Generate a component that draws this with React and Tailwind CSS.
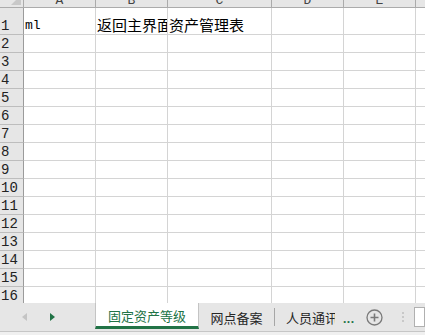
import React from 'react';

const cols = [
  { key: 'A', w: 'w-[72px]' },
  { key: 'B', w: 'w-[72px]' },
  { key: 'C', w: 'w-[104px]' },
  { key: 'D', w: 'w-[72px]' },
  { key: 'E', w: 'w-[72px]' },
];

const rows = Array.from({ length: 16 }, (_, i) => i + 1);

const mono = "font-['Liberation_Mono','Noto_Sans_CJK_SC',monospace]";
const cjk = "font-['Noto_Sans_CJK_SC','Noto_Sans',sans-serif]";

function Cell({ col, row }) {
  let content = null;
  if (row === 1 && col === 'A') content = <span className={`${mono} text-[13px] text-black`}>ml</span>;
  if (row === 1 && col === 'B') content = <span className={`${cjk} text-[15px] text-black`}>返回主界面</span>;
  if (row === 1 && col === 'C') content = <span className={`${cjk} text-[15px] text-black`}>资产管理表</span>;
  return (
    <div className={`${cols.find(c => c.key === col).w} shrink-0 h-full border-r border-b border-[#d4d4d4] bg-white flex items-end pl-[1px] pb-[2px] overflow-hidden whitespace-nowrap leading-none`}>
      {content}
    </div>
  );
}

export default function App() {
  return (
    <div className="w-[425px] h-[335px] overflow-hidden bg-white flex flex-col select-none">
      {/* column header */}
      <div className="flex h-[8px] shrink-0 bg-[#e6e6e6]">
        <div className="w-[24px] shrink-0 h-full border-r border-b border-[#ababab] relative overflow-hidden">
          <div className="absolute right-[2px] bottom-[2px] w-0 h-0 border-l-[10px] border-l-transparent border-b-[10px] border-b-[#c8c8c8]" />
        </div>
        {cols.map(c => (
          <div key={c.key} className={`${c.w} shrink-0 h-full border-r border-b border-[#ababab] overflow-hidden flex justify-center`}>
            <span className={`${mono} block text-[13px] leading-[14px] mt-[-6px] text-[#444]`}>{c.key}</span>
          </div>
        ))}
        <div className="flex-1 h-full border-b border-[#ababab]" />
      </div>

      {/* grid */}
      <div className="flex-1 overflow-hidden">
        {rows.map(r => (
          <div key={r} className={`flex ${r === 1 ? 'h-[27px]' : 'h-[18px]'}`}>
            <div className="w-[24px] shrink-0 h-full bg-[#e6e6e6] border-r border-r-[#9b9b9b] border-b border-b-[#bdbdbd] flex items-end pl-[1px] leading-none pb-[1px]">
              <span className={`${mono} text-[14px] text-[#222]`}>{r}</span>
            </div>
            {cols.map(c => (
              <Cell key={c.key} col={c.key} row={r} />
            ))}
            <div className="flex-1 h-full border-b border-[#d4d4d4]" />
          </div>
        ))}
      </div>

      {/* sheet tabs */}
      <div className="h-[28px] shrink-0 bg-[#e6e6e6] flex items-stretch">
        <div className="w-[95px] shrink-0 flex items-center">
          <div className="ml-[22px] w-0 h-0 border-y-[4px] border-y-transparent border-r-[5px] border-r-[#c4c4c4]" />
          <div className="ml-[23px] w-0 h-0 border-y-[4px] border-y-transparent border-l-[5px] border-l-[#217346]" />
        </div>
        <div className="w-[104px] shrink-0 bg-white border-l border-r border-[#c4c4c4] border-b-[3px] border-b-[#217346] mb-[2px] flex items-center justify-center">
          <span className={`${cjk} text-[13px] text-[#217346] leading-none mt-[1px]`}>固定资产等级</span>
        </div>
        <div className="w-[75px] shrink-0 flex items-center justify-center">
          <span className={`${cjk} text-[13px] text-[#262626] leading-none`}>网点备案</span>
        </div>
        <div className="w-[1px] bg-[#a6a6a6] my-[5px] shrink-0" />
        <div className="w-[60px] shrink-0 flex items-center overflow-hidden pl-[11px]">
          <span className={`${cjk} text-[13px] text-[#262626] leading-none whitespace-nowrap`}>人员通讯</span>
        </div>
        <div className="w-[20px] shrink-0 flex items-center pl-[8px]">
          <span className="text-[#217346] font-bold text-[12px] leading-none tracking-[0.5px] mt-[4px]">...</span>
        </div>
        <div className="w-[38px] shrink-0 flex items-center justify-center">
          <svg width="17" height="17" viewBox="0 0 17 17">
            <circle cx="8.5" cy="8.5" r="7.5" fill="none" stroke="#7a7a7a" strokeWidth="1.3" />
            <path d="M8.5 4.5v8M4.5 8.5h8" stroke="#7a7a7a" strokeWidth="1.6" />
          </svg>
        </div>
        <div className="w-[20px] shrink-0 flex flex-col items-center justify-center gap-[2px]">
          <div className="w-[2px] h-[2px] bg-[#c8c8c8]" />
          <div className="w-[2px] h-[2px] bg-[#c8c8c8]" />
          <div className="w-[2px] h-[2px] bg-[#c8c8c8]" />
        </div>
        <div className="flex-1 flex items-center">
          <div className="w-full h-[20px] bg-white border border-[#b0b0b0] ml-[1px]" />
        </div>
      </div>
      <div className="h-[4px] shrink-0 bg-[#f0f0f0] border-t border-[#c6c6c6]" />
    </div>
  );
}
